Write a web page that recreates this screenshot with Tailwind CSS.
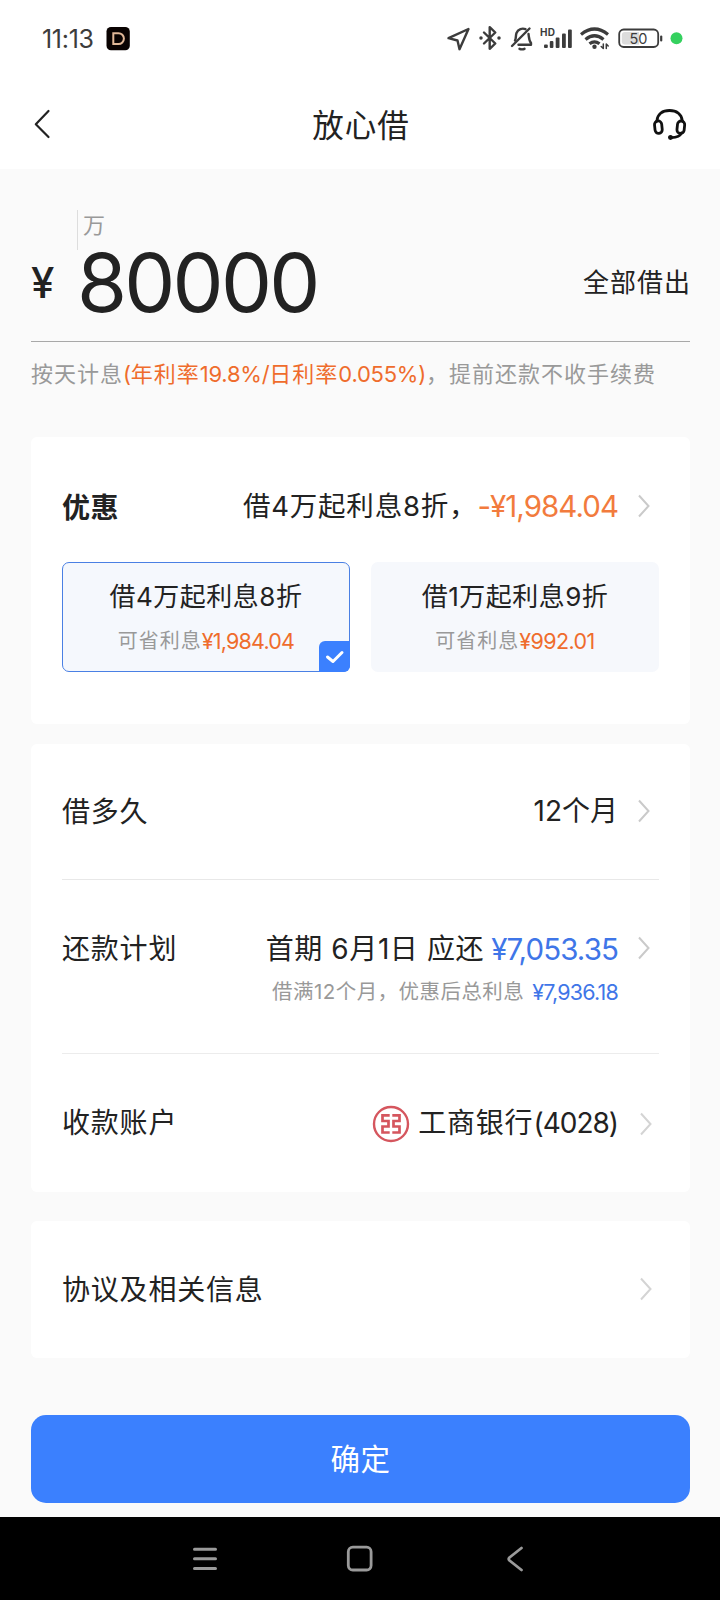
<!DOCTYPE html>
<html lang="zh-CN">
<head>
<meta charset="utf-8">
<title>放心借</title>
<script src="https://cdn.jsdelivr.net/npm/@tailwindcss/browser@4"></script>
</head>
<body class="bg-[#fafafa]">
<div class="w-[720px] h-[1600px] flex flex-col overflow-hidden bg-[#fafafa] font-['Inter','Noto_Sans_CJK_SC',sans-serif] text-[#222] whitespace-nowrap">

  <!-- status bar -->
  <div class="h-[78px] bg-white shrink-0 flex items-center pl-[42px] pr-[36px] text-[#3c3c3c]">
    <span class="text-[25px] leading-[78px] tracking-[-0.3px]">11:13</span>
    <svg class="ml-3 shrink-0" width="24" height="24" viewBox="0 0 24 24"><rect x="0.500" width="23.300" height="23.300" rx="4.500" fill="#0a0302"/><path d="M7.300 6.200H12.500a5.400 5.400 0 0 1 0 10.800H7.300z" fill="none" stroke="#e2b898" stroke-width="2"/></svg>
    <svg class="ml-auto shrink-0" width="240" height="28" viewBox="444 25 240 28" fill="none" stroke="#3c3c3c" stroke-width="2.400" stroke-linejoin="round" stroke-linecap="round">
      <path d="M468.500 29L448.500 38.200L457.500 40.500L459.500 49.200Z"/>
      <path d="M484 32.500L495.300 43.500L489.700 48.800V27.200L495.300 32.500L484 43.500" />
      <circle cx="481" cy="38" r="1" fill="#3c3c3c" stroke-width="1.500"/><circle cx="499" cy="38" r="1" fill="#3c3c3c" stroke-width="1.500"/>
      <path d="M529.500 28.500L512 46"/>
      <path d="M515 40.500C516.300 38.500 515.500 35.500 516.500 33C518 29 522.500 27.800 525.500 29.200M528.500 34C529 37.500 529 40.500 531 43V44.800H518.500"/>
      <path d="M519.500 48.800Q522 50 524.500 48.800"/>
      <g stroke="none" fill="#3c3c3c"><rect x="544" y="44.500" width="3.800" height="3.500" rx="1"/><rect x="549.800" y="41" width="3.600" height="7" rx="1"/><rect x="555.700" y="37.500" width="3.800" height="10.500" rx="1"/><rect x="562" y="33.500" width="3.800" height="14.500" rx="1"/><rect x="568" y="29.500" width="3.800" height="18.500" rx="1"/>
      <text x="540" y="35.800" font-size="10" font-weight="700" font-family="Inter" textLength="15">HD</text></g>
      <g stroke-width="3.200" stroke-linecap="butt"><path d="M581 34.500Q594.500 23.500 608 34.500"/><path d="M585.500 39.500Q594.500 32 603.500 39.500"/><path d="M589.500 43.800Q594.500 39.800 599.500 43.800"/></g>
      <circle cx="594.500" cy="46.800" r="2.200" fill="#3c3c3c" stroke="none"/>
      <path d="M603.300 44V48.500L601.200 46.500M606.300 48.500V44L608.200 46" stroke-width="1.500"/>
      <rect x="619.200" y="29.500" width="39" height="17.500" rx="4.500" stroke-width="1.800"/>
      <path d="M625 32H639V44.500H625Q621.800 44.500 621.800 41.500V35Q621.800 32 625 32Z" fill="#dcdcdc" stroke="none"/>
      <path d="M661.200 36.500V40.500" stroke-width="2.200"/>
      <text x="638.500" y="43.500" font-size="14.500" text-anchor="middle" font-family="Inter" fill="#3c3c3c" stroke="none">50</text>
      <circle cx="676.500" cy="38.200" r="6" fill="#35d15f" stroke="none"/>
    </svg>
  </div>

  <!-- title bar -->
  <div class="h-[91px] bg-white shrink-0 flex items-center justify-between px-[32px]">
    <svg class="shrink-0" width="36" height="32" viewBox="32 108 36 32" fill="none" stroke="#222" stroke-width="2.200" stroke-linecap="round" stroke-linejoin="round"><path d="M48.500 111L35.800 124.200L48.500 137"/></svg>
    <h1 class="text-[31.500px] tracking-[1px] pt-[5px] pl-[2px]">放心借</h1>
    <svg class="shrink-0" width="36" height="36" viewBox="652 105.500 36 36" fill="none" stroke="#111" stroke-width="2.800" stroke-linecap="round"><path d="M657 120C657.500 113.500 662.500 110 669.500 110S681.500 113.500 682.200 120"/><rect x="654.800" y="120.500" width="7.200" height="12.500" rx="3.600" transform="rotate(-6 658 127)"/><rect x="677.200" y="120.500" width="7.200" height="12.500" rx="3.600" transform="rotate(6 681 127)"/><path d="M681.500 132.500Q679.500 137 671.500 137.200"/><circle cx="670.500" cy="137" r="1.600" fill="#111" stroke-width="1.800"/></svg>
  </div>

  <!-- amount -->
  <div class="h-[173px] shrink-0 ml-[31px] mr-[30px] border-b border-[#a8a8a8] flex flex-col">
    <div class="mt-[41px] ml-[46px] h-[40px] border-l border-[#ddd] pl-[5px] text-[22px] leading-[30px] text-[#999]">万</div>
    <div class="flex items-center h-[66px]">
      <span class="text-[42px] leading-[66px] font-medium w-[45px]">¥</span>
      <span class="text-[81px] leading-[66px] tracking-[-2.800px] ml-px">80000</span>
      <span class="text-[26px] tracking-[1px] ml-auto -mr-px pb-[2px]">全部借出</span>
    </div>
  </div>
  <p class="h-[95px] shrink-0 ml-[31px] pt-[15px] text-[22px] leading-[34px] tracking-[1px] text-[#999]">按天计息<span class="text-[#ef6c2c]"><span class="tracking-[-0.250px]">(</span>年利率<span class="tracking-[-0.250px]">19.8%/</span>日利率<span class="tracking-[-0.250px]">0.055%)</span></span>，提前还款不收手续费</p>

  <!-- coupon card -->
  <section class="ml-[31px] mr-[30px] h-[287px] shrink-0 bg-white rounded-md px-[31px] pt-[45px]">
    <div class="flex items-center h-[48px]">
      <h2 class="text-[28px] tracking-[0.500px] font-bold pt-[3px]">优惠</h2>
      <span class="ml-auto text-[27.500px] tracking-[0.800px] pt-px">借4万起利息8折，</span><span class="text-[29.500px] tracking-[-0.950px] text-[#f27b3d]">-¥1,984.04</span>
      <svg class="ml-[20px] mr-[9px] shrink-0" width="12" height="24" viewBox="0 0 12 24" fill="none" stroke="#cacaca" stroke-width="2"><path d="M1 1.500L10.500 12L1 22.500"/></svg>
    </div>
    <div class="mt-[32px] grid grid-cols-2 gap-[21px]">
      <div class="relative h-[110px] rounded-[7px] border-[1.500px] border-[#4a80e4] bg-[#f5f8fd] flex flex-col items-center pt-[15px]">
        <span class="text-[26px] leading-[38px] tracking-[0.500px]">借4万起利息8折</span>
        <span class="mt-[8px] leading-[34px] flex items-center"><span class="text-[20px] tracking-[1px] text-[#999]">可省利息</span><span class="text-[21.500px] tracking-[-0.800px] text-[#ef6c2c]">¥1,984.04</span></span>
        <span class="absolute -right-px -bottom-px w-[31px] h-[31px] bg-[#3b80fe] rounded-tl-[6px] rounded-br-[6px]"><svg width="31" height="31" viewBox="0 0 31 31" fill="none" stroke="#fff" stroke-width="3" stroke-linecap="round" stroke-linejoin="round"><path d="M8.500 16L14 20.500L23 11.500"/></svg></span>
      </div>
      <div class="h-[110px] rounded-[7px] bg-[#f6f8fc] flex flex-col items-center pt-[16px]">
        <span class="text-[26px] leading-[38px] tracking-[0.500px]">借1万起利息9折</span>
        <span class="mt-[8px] leading-[34px] flex items-center"><span class="text-[20px] tracking-[1px] text-[#999]">可省利息</span><span class="text-[21.500px] tracking-[-0.600px] text-[#ef6c2c]">¥992.01</span></span>
      </div>
    </div>
  </section>

  <!-- loan details card -->
  <section class="mt-[20px] ml-[31px] mr-[30px] h-[448px] shrink-0 bg-white rounded-md px-[31px]">
    <div class="h-[136px] flex items-center border-b border-[#e8e8e8]">
      <span class="text-[28px] tracking-[0.800px] pt-px">借多久</span>
      <span class="ml-auto text-[28px] pb-px">12个月</span>
      <svg class="ml-[20px] mr-[9px] mb-[2px] shrink-0" width="12" height="24" viewBox="0 0 12 24" fill="none" stroke="#cacaca" stroke-width="2"><path d="M1 1.500L10.500 12L1 22.500"/></svg>
    </div>
    <div class="h-[174px] border-b border-[#ececec] pt-[46px]">
      <div class="flex items-center h-[46px]">
        <span class="text-[28px] tracking-[0.800px]">还款计划</span>
        <span class="ml-auto text-[28px] tracking-[0.600px]">首期 6月1日 应还</span><span class="ml-[7px] text-[29.500px] tracking-[-0.900px] text-[#3f76e8]">¥7,053.35</span>
        <svg class="ml-[20px] mr-[9px] mb-[2px] shrink-0" width="12" height="24" viewBox="0 0 12 24" fill="none" stroke="#cacaca" stroke-width="2"><path d="M1 1.500L10.500 12L1 22.500"/></svg>
      </div>
      <div class="flex items-center justify-end h-[40px] pr-[41px]"><span class="text-[20.500px] tracking-[0.450px] text-[#999]">借满12个月，优惠后总利息</span><span class="ml-[8px] text-[21.500px] tracking-[-0.800px] text-[#3f76e8]">¥7,936.18</span></div>
    </div>
    <div class="h-[138px] flex items-center">
      <span class="text-[28px] tracking-[0.800px]">收款账户</span>
      <svg class="ml-auto mt-px shrink-0" width="38" height="38" viewBox="0 0 38 38" fill="none" stroke="#d5565e"><circle cx="19" cy="19" r="17" stroke-width="2.400"/><path d="M17.700 10.300H10.500V16H16.500V21.500H10.500V27.500H17.700M20.300 10.300H27.500V16H21.500V21.500H27.500V27.500H20.300" stroke-width="2.700"/></svg>
      <span class="ml-[8px] text-[28px] tracking-[0.800px]">工商银行<span class="tracking-[-1px]">(4028)</span></span>
      <svg class="ml-[22px] mr-[7px] mt-[2px] shrink-0" width="12" height="24" viewBox="0 0 12 24" fill="none" stroke="#d4d4d4" stroke-width="2"><path d="M1 1.500L10.500 12L1 22.500"/></svg>
    </div>
  </section>

  <!-- agreements card -->
  <section class="mt-[29px] ml-[31px] mr-[30px] h-[137px] shrink-0 bg-white rounded-md px-[31px] flex items-center justify-between">
    <span class="text-[28px] tracking-[0.800px]">协议及相关信息</span>
    <svg class="mr-[7px] mb-px shrink-0" width="12" height="24" viewBox="0 0 12 24" fill="none" stroke="#d4d4d4" stroke-width="2"><path d="M1 1.500L10.500 12L1 22.500"/></svg>
  </section>

  <button class="mt-[57px] ml-[31px] mr-[30px] h-[88px] shrink-0 rounded-[15px] bg-[#3b80fe] text-white text-[29.500px] tracking-[0.500px]">确定</button>

  <!-- system navigation -->
  <nav class="mt-[14px] h-[83px] shrink-0 bg-black flex items-center pl-[192px] gap-[128px]">
    <svg class="shrink-0" width="26" height="28" viewBox="192 1545 26 28" stroke="#9a9a9a" stroke-width="3" stroke-linecap="round"><path d="M194.500 1549.200H215.500M194.500 1558.800H215.500M194.500 1568.500H215.500"/></svg>
    <svg class="shrink-0" width="28" height="28" viewBox="346 1545 28 28" fill="none" stroke="#9a9a9a" stroke-width="2.800"><rect x="348.300" y="1547.200" width="22.800" height="22.800" rx="4.500"/></svg>
    <svg class="shrink-0" width="24" height="28" viewBox="502 1545 24 28" fill="none" stroke="#9a9a9a" stroke-width="2.800" stroke-linecap="round" stroke-linejoin="round"><path d="M521.500 1548L509.500 1557.500Q508 1559 509.500 1560.500L521.500 1570"/></svg>
  </nav>
</div>
</body>
</html>
